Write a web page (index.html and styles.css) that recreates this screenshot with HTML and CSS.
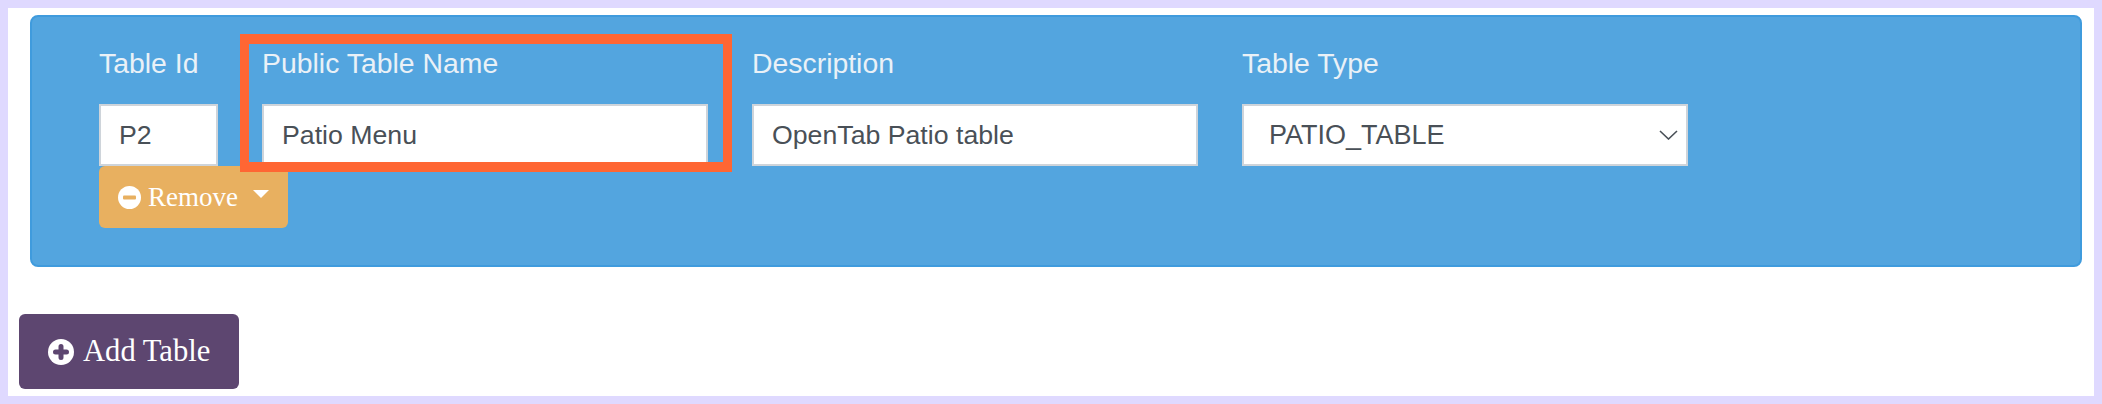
FILE: index.html
```html
<!DOCTYPE html>
<html lang="en">
<head>
  <meta charset="UTF-8" />
  <title>Tables</title>
  <link rel="stylesheet" href="styles.css">
</head>
<body>

 <div class="frame">

  <div class="table-panel">
    <div class="table-fields">
      <div class="field field-id">
        <label for="table-id">Table Id</label>
        <input id="table-id" type="text" value="P2" />
        <button class="btn-remove">
          <svg class="icon-minus" viewBox="0 0 23 23"><circle cx="11.5" cy="11.5" r="11.5" fill="#fff"/><rect x="5" y="9.5" width="13" height="4" rx="1" fill="#e8b060"/></svg>
          <span>Remove</span>
          <i class="caret"></i>
        </button>
      </div>
      <div class="field">
        <label for="table-name">Public Table Name</label>
        <input id="table-name" type="text" value="Patio Menu" />
      </div>
      <div class="field">
        <label for="table-desc">Description</label>
        <input id="table-desc" type="text" value="OpenTab Patio table" />
      </div>
      <div class="field">
        <label for="table-type">Table Type</label>
        <div class="select-wrap">
          <select id="table-type">
            <option>PATIO_TABLE</option>
          </select>
          <svg class="chevron" viewBox="0 0 19 10"><path d="M1 1l8.5 8 8.5-8" fill="none" stroke="#495057" stroke-width="1.6"/></svg>
        </div>
      </div>
    </div>
    <!-- riquadro evidenziato -->
    <div class="highlight"></div>
  </div>

  <button class="btn-add">
    <svg class="icon-plus" viewBox="0 0 26 26"><circle cx="13" cy="13" r="13" fill="#fff"/><path d="M13 7.5v11M7.5 13h11" stroke="#5d4670" stroke-width="5" stroke-linecap="round"/></svg>
    <span>Add Table</span>
  </button>

 </div>

</body>
</html>
```

FILE: styles.css
```css
body {
  margin: 0;
  font-family: "Liberation Sans", Arial, sans-serif;
  background: #fff;
}
.frame {
  box-sizing: border-box;
  height: 404px;
  border: 8px solid #dfd9ff;
  background: #fff;
  overflow: hidden;
}

/* pannello tavolo */
.table-panel {
  position: relative;
  box-sizing: border-box;
  height: 252px;
  margin: 7px 12px 47px 22px;
  padding: 30px 0 0 67px;
  background: #53a5df;
  border: 2px solid #3f9bdd;
  border-radius: 8px;
}
.table-fields {
  display: flex;
  gap: 44px;
}
.field {
  display: flex;
  flex-direction: column;
  width: 446px;
}
.field-id {
  width: 119px;
}
.field label {
  height: 32px;
  line-height: 32px;
  margin-bottom: 25px;
  font-size: 28.4px;
  color: #eaf1f7;
  white-space: nowrap;
}
.field input,
.field select {
  box-sizing: border-box;
  width: 100%;
  height: 62px;
  padding: 0 18px;
  font-family: "Liberation Sans", Arial, sans-serif;
  font-size: 26.7px;
  color: #495057;
  background: #fff;
  border: 2px solid #ced4da;
  border-radius: 0;
  outline: none;
}
.select-wrap {
  position: relative;
}
.field select {
  appearance: none;
  padding-left: 25px;
  font-size: 27px;
}
.chevron {
  position: absolute;
  top: 26px;
  right: 10px;
  width: 19px;
  height: 10px;
}

/* bottoni */
.btn-remove {
  display: flex;
  align-items: center;
  width: 189px;
  height: 62px;
  padding: 0 0 0 19px;
  border: none;
  border-radius: 6px;
  background: #e8b060;
  color: #fff;
  font-family: "Liberation Serif", "Times New Roman", serif;
  font-size: 27px;
}
.icon-minus {
  width: 23px;
  height: 23px;
  margin-right: 7px;
}
.caret {
  width: 0;
  height: 0;
  margin: 0 0 6px 15px;
  border-left: 8px solid transparent;
  border-right: 8px solid transparent;
  border-top: 8px solid #fff;
}
.btn-add {
  display: flex;
  align-items: center;
  width: 220px;
  height: 75px;
  margin-left: 11px;
  padding: 0 0 0 29px;
  border: none;
  border-radius: 6px;
  background: #5d4670;
  color: #fff;
  font-family: "Liberation Serif", "Times New Roman", serif;
  font-size: 30.6px;
}
.icon-plus {
  width: 26px;
  height: 26px;
  margin-right: 9px;
}

/* riquadro arancione sopra i campi */
.highlight {
  position: absolute;
  top: 17px;
  left: 208px;
  box-sizing: border-box;
  width: 492px;
  height: 138px;
  border: 10px solid #ff6633;
  border-left-width: 9px;
  border-right-width: 9px;
}
```
